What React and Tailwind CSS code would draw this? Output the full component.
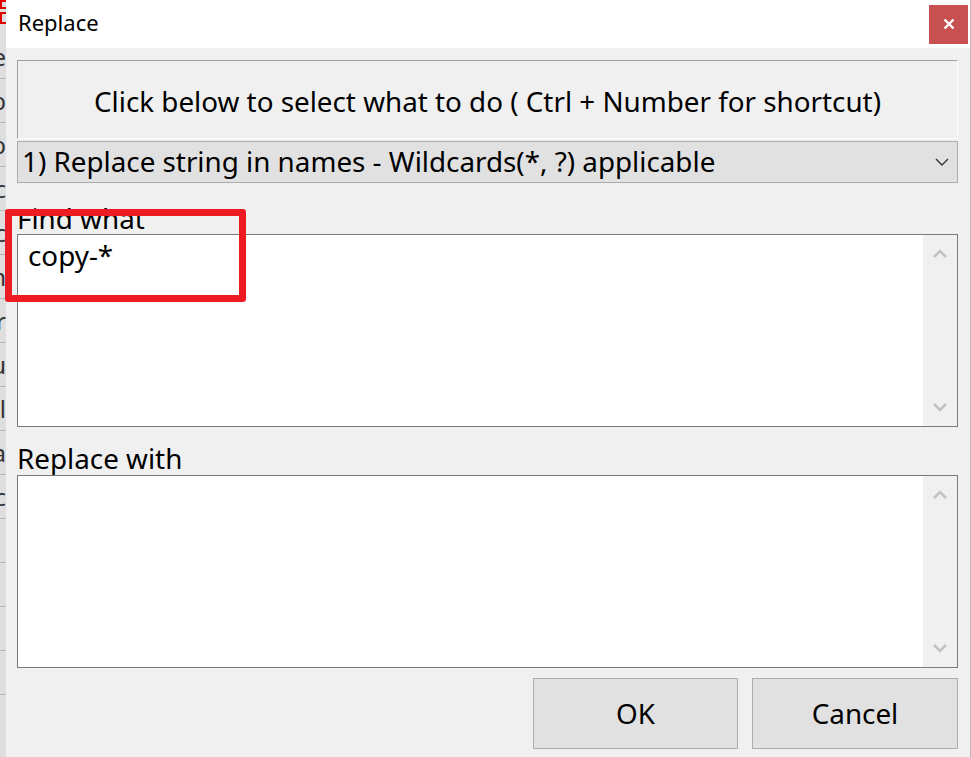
import React from "react";

const font = { fontFamily: '"Noto Sans", "Open Sans", sans-serif' };

function Chevron({ up, className }) {
  return (
    <svg width="14" height="10" viewBox="0 0 14 10" className={className}>
      <path
        d={up ? "M1 8 L7 2 L13 8" : "M1 2 L7 8 L13 2"}
        fill="none"
        stroke="currentColor"
        strokeWidth="2.6"
      />
    </svg>
  );
}

function TextBox({ children }) {
  return (
    <div className="flex h-[193px] border border-[#7a7a7a] bg-white">
      <div className="flex-1 px-[10px] pt-[3px] text-[27.8px] leading-[34px] text-black">{children}</div>
      <div className="flex w-[34px] flex-col items-center justify-between bg-[#f0f0f0] py-[14px] text-[#c2c2c2]">
        <Chevron up />
        <Chevron />
      </div>
    </div>
  );
}

export default function App() {
  const stripRows = ["e", "p", "p", "c", "c", "n", "r", "u", "el", "a", "c", "", "", "", ""];
  return (
    <div className="relative flex h-[757px] w-[971px] overflow-hidden bg-[#f0f0f0]" style={font}>
      {/* background window strip */}
      <div className="flex w-[6px] flex-col bg-[#dedede]">
        <div className="flex h-[35px] flex-col gap-[3px] pt-[0px]">
          <div className="h-[9px] w-[6px] border-2 border-r-0 border-[#e00000]"></div>
          <div className="h-[12px] w-[6px] border-2 border-r-0 border-[#e00000]"></div>
        </div>
        {stripRows.map((t, i) => (
          <div
            key={i}
            className="flex h-[44px] shrink-0 items-center justify-end overflow-hidden border-b border-[#b8b8b8] text-[24px] leading-none text-[#333]"
          >
            <span className="whitespace-nowrap">{t}</span>
          </div>
        ))}
      </div>

      {/* dialog */}
      <div className="flex w-[964px] flex-col bg-[#f0f0f0]">
        <div className="flex h-[48px] items-center justify-between bg-white pl-[12px] pr-[2px]">
          <span className="pb-[3px] text-[22px] text-black">Replace</span>
          <div className="flex h-[39px] w-[39px] items-center justify-center bg-[#c75050]">
            <svg width="12" height="12" viewBox="0 0 12 12">
              <path d="M1.5 1.5 L10.5 10.5 M10.5 1.5 L1.5 10.5" stroke="white" strokeWidth="2.4" />
            </svg>
          </div>
        </div>

        <div className="flex flex-1 flex-col pl-[11px] pr-[12px] pt-[12px]">
          <div className="flex h-[79px] items-center justify-center border border-b-white border-l-[#a0a0a0] border-r-white border-t-[#a0a0a0] pt-[4px] text-[27.8px] text-black">
            Click below to select what to do ( Ctrl + Number for shortcut)
          </div>
          <div className="mt-[2px] flex h-[42px] items-center justify-between border border-[#adadad] bg-[#e1e1e1] pl-[4px] pr-[8px] text-[27.8px] text-black">
            <span>1) Replace string in names - Wildcards(*, ?) applicable</span>
            <svg width="14" height="9" viewBox="0 0 14 9" className="text-[#333]">
              <path d="M1 1 L7 7 L13 1" fill="none" stroke="currentColor" strokeWidth="1.4" />
            </svg>
          </div>

          <div className="flex h-[51px] items-end text-[27.8px] leading-[32px] text-black">Find what</div>
          <TextBox>copy-*</TextBox>

          <div className="flex h-[48px] items-end text-[27.8px] leading-[34px] text-black">Replace with</div>
          <TextBox></TextBox>

          <div className="mt-[10px] flex justify-end gap-[14px]">
            <button className="h-[71px] w-[205px] border border-[#adadad] bg-[#e1e1e1] text-[27.8px] text-black">OK</button>
            <button className="h-[71px] w-[206px] border border-[#adadad] bg-[#e1e1e1] text-[27.8px] text-black">Cancel</button>
          </div>
        </div>
      </div>

      <div className="w-[1px] bg-[#b8b8b8]"></div>

      {/* red annotation */}
      <div className="absolute left-[5px] top-[209px] h-[93px] w-[241px] rounded-[3px] border-[7px] border-[#ed1c24]"></div>
    </div>
  );
}
